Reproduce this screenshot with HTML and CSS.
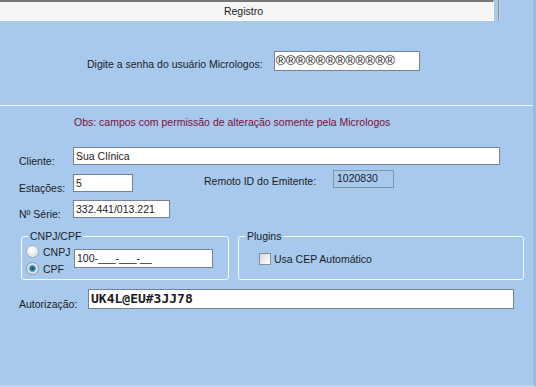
FILE: index.html
```html
<!DOCTYPE html>
<html lang="pt-BR">
<head>
    <meta charset="UTF-8">
    <title>Registro</title>
    <link rel="stylesheet" href="styles.css">
</head>
<body>
    <div class="window">
        <div class="tabs">
            <div class="tab">Registro</div>
            <div class="tab-edge"></div>
        </div>

        <div class="senha">
            <span class="senha-label">Digite a senha do usuário Micrologos:</span>
            <div class="field senha-field">®®®®®®®®®®®®</div>
        </div>

        <div class="dados">
            <p class="obs">Obs: campos com permissão de alteração somente pela Micrologos</p>

            <div class="row row-cliente">
                <span class="lbl">Cliente:</span>
                <div class="field w-cliente">Sua Clínica</div>
            </div>

            <div class="row row-estacoes">
                <span class="lbl">Estações:</span>
                <div class="field w-estacoes">5</div>
                <span class="remoto-lbl">Remoto ID do Emitente:</span>
                <div class="remoto">1020830</div>
            </div>

            <div class="row row-serie">
                <span class="lbl">Nº Série:</span>
                <div class="field w-serie">332.441/013.221</div>
            </div>

            <div class="groups">
                <fieldset class="group group-doc">
                    <legend>CNPJ/CPF</legend>
                    <div class="doc">
                        <div class="radios">
                            <div class="opt"><span class="radio"></span>CNPJ</div>
                            <div class="opt"><span class="radio checked"></span>CPF</div>
                        </div>
                        <div class="field w-doc">100-___-___-__</div>
                    </div>
                </fieldset>
                <fieldset class="group group-plugins">
                    <legend>Plugins</legend>
                    <div class="check-row"><span class="check"></span>Usa CEP Automático</div>
                </fieldset>
            </div>

            <div class="row row-aut">
                <span class="lbl lbl-aut">Autorização:</span>
                <div class="field w-aut">UK4L@EU#3JJ78</div>
            </div>
        </div>
    </div>
</body>
</html>
```

FILE: styles.css
```css
body {
    margin: 0;
    font-family: "Liberation Sans", Arial, sans-serif;
    font-size: 10.5px;
    color: #1c1c1c;
    background: #a7c9ee;
}

.window {
    width: 536px;
    height: 387px;
    box-sizing: border-box;
    border-right: 3px solid #a2bcd8;
    border-bottom: 2px solid #bcd6f3;
    overflow: hidden;
}

/* aba superior */
.tabs {
    display: flex;
    height: 21px;
}

.tab {
    width: 494px;
    box-sizing: border-box;
    border-top: 2px solid #767676;
    border-right: 1px solid #fff;
    border-bottom: 1px solid #fff;
    background: #f6f6f6;
    text-align: center;
    line-height: 18px;
    padding-right: 6px;
}

.tab-edge {
    margin-left: 4px;
    width: 2px;
    height: 20px;
    background: linear-gradient(90deg, #8d8d8d 50%, #d4d4d4 50%);
}

/* senha */
.senha {
    display: flex;
    align-items: flex-end;
    padding: 30px 0 34px 87px;
    border-bottom: 1px solid #f3f8fd;
}

.senha-label {
    line-height: 14px;
    margin-right: 11px;
}

.field {
    box-sizing: border-box;
    height: 18px;
    border: 1px solid #76828e;
    background: #fff;
    padding: 0 2px;
    line-height: 16px;
    white-space: nowrap;
    overflow: hidden;
}

.senha-field {
    width: 146px;
    height: 20px;
    padding-left: 1px;
    font-size: 13.5px;
    line-height: 18px;
}

/* dados */
.dados {
    padding-top: 9px;
}

.obs {
    margin: 0 0 0 74px;
    line-height: 14px;
    color: #7d1235;
}

.row {
    display: flex;
    align-items: flex-end;
    padding-left: 19px;
}

.lbl {
    width: 54px;
    line-height: 14px;
    margin-bottom: -3px;
}

.row-cliente {
    margin-top: 18px;
}

.w-cliente {
    width: 427px;
}

.row-estacoes {
    margin-top: 5px;
}

.w-estacoes {
    width: 60px;
}

.remoto-lbl {
    width: 129px;
    margin-left: 71px;
    margin-bottom: 4px;
    line-height: 14px;
}

.remoto {
    box-sizing: border-box;
    width: 61px;
    height: 18px;
    margin-bottom: 4px;
    border: 1px solid #86929e;
    padding-left: 3px;
    line-height: 14px;
}

.row-serie {
    margin-top: 8px;
}

.w-serie {
    width: 97px;
}

/* grupos */
.groups {
    display: flex;
    gap: 9px;
    padding-left: 21px;
    margin-top: 11px;
}

.group {
    margin: 0;
    box-sizing: border-box;
    height: 51px;
    border: 1px solid #f4f8fd;
    border-radius: 3px;
    padding: 0 4px 2px 4px;
    min-width: 0;
}

.group legend {
    padding: 0 2px;
    margin-left: 2px;
    line-height: 14px;
}

.group-doc {
    width: 208px;
}

.group-plugins {
    width: 286px;
}

.doc {
    display: flex;
}

.radios {
    width: 48px;
}

.opt {
    display: flex;
    align-items: center;
    gap: 4px;
    height: 17px;
}

.radio {
    width: 13px;
    height: 13px;
    box-sizing: border-box;
    border-radius: 50%;
    border: 1px solid #a4adb6;
    background: radial-gradient(circle at 40% 35%, #ffffff, #d3d6d9);
}

.radio.checked {
    border-color: #8797a6;
    background: radial-gradient(circle at 50% 50%, #1b4a72 0, #2f7fb4 2.5px, #9fc6dd 3.5px, #eef1f3 4.5px, #d2d6da 6px);
}

.w-doc {
    width: 139px;
    height: 19px;
    margin-top: 6px;
}

.check-row {
    display: flex;
    align-items: center;
    gap: 3px;
    margin: 10px 0 0 16px;
}

.check {
    width: 12px;
    height: 12px;
    box-sizing: border-box;
    border: 1px solid #8e8f90;
    background: linear-gradient(135deg, #d6d7d8, #ffffff);
}

.row-aut {
    margin-top: 9px;
}

.lbl-aut {
    width: 69px;
    margin-bottom: -2px;
}

.w-aut {
    width: 426px;
    height: 20px;
    font-family: "DejaVu Sans Mono", monospace;
    font-weight: bold;
    font-size: 13px;
    line-height: 18px;
}
```
